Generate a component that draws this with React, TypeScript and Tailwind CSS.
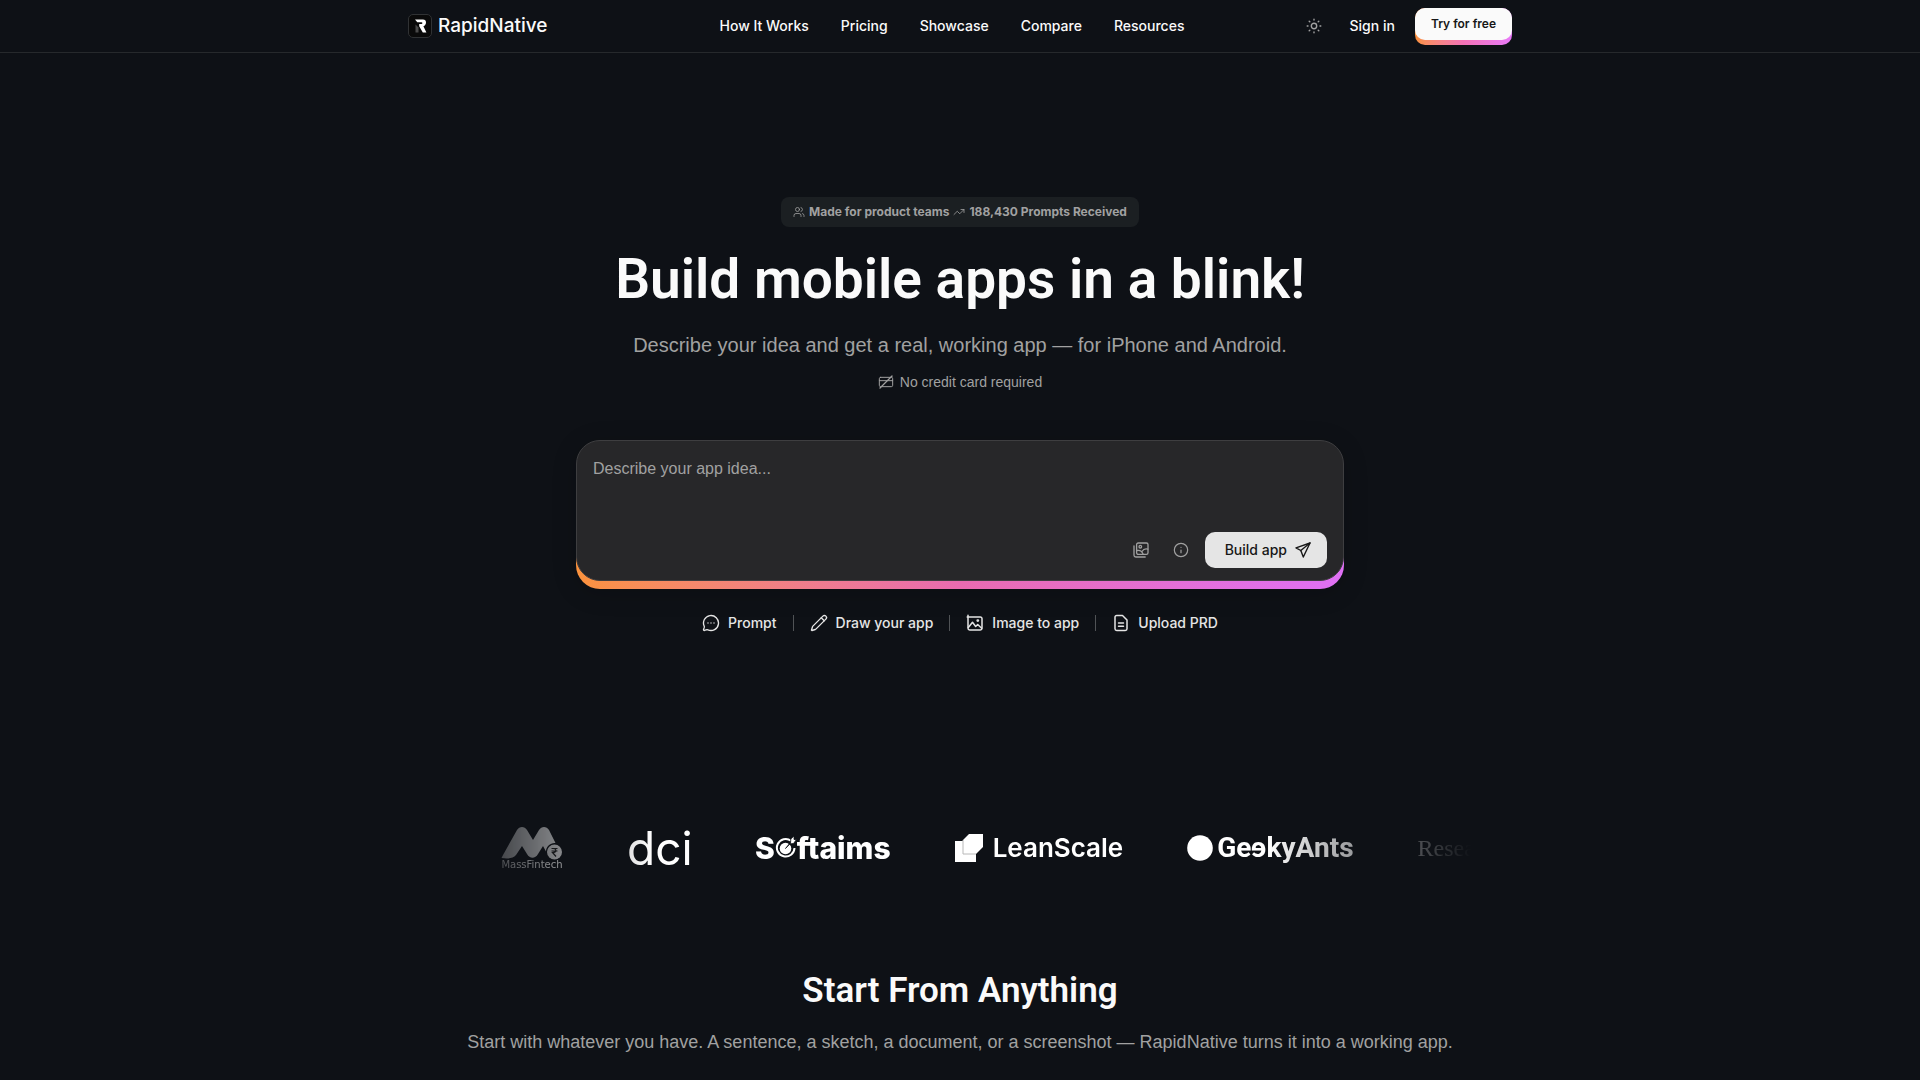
import type { ReactNode } from "react";
import { CreditCard, Info, MessageCircleMore, Pencil, TrendingUp, Users } from "lucide-react";

const NAV_LINKS = ["How It Works", "Pricing", "Showcase", "Compare", "Resources"];

/* ------------------------------------------------------------------ */
/*  Icons                                                              */
/* ------------------------------------------------------------------ */

function SunIcon() {
  return (
    <svg width="16" height="16" viewBox="0 0 16 16" fill="none" stroke="currentColor" strokeWidth="1.4" strokeLinecap="round">
      <circle cx="8" cy="8" r="2.7" />
      <path d="M8 1.2v.8M8 14v.8M1.2 8H2M14 8h.8M3.200 3.200l.6.6M12.200 12.200l.6.6M3.200 12.800l.6-.6M12.200 3.800l.6-.6" />
    </svg>
  );
}

function GalleryIcon() {
  return (
    <svg width="16" height="16" viewBox="0 0 16 16" fill="none" stroke="currentColor" strokeWidth="1.3" strokeLinecap="round" strokeLinejoin="round">
      <rect x="3.6" y="1" width="11.4" height="11.4" rx="1.6" />
      <path d="M1 3.8v9.4c0 1 .8 1.8 1.8 1.8h9.4" />
      <circle cx="7.3" cy="4.7" r="1.3" />
      <path d="M3.800 8.500c3-.6 5.200.8 6.400 3.700M9 9.500c1.200-2 3.300-3 5.800-2.300" />
    </svg>
  );
}

function PlaneIcon() {
  return (
    <svg width="16" height="16" viewBox="0 0 16 16" fill="none" stroke="currentColor" strokeWidth="1.4" strokeLinecap="round" strokeLinejoin="round">
      <path d="M15 1 1 5.800l4.800 2.700L8.300 15 15 1Z" />
      <path d="M15 1 5.800 8.500" />
    </svg>
  );
}

function ImageIcon() {
  return (
    <svg width="18" height="18" viewBox="0 0 18 18" fill="none" stroke="currentColor" strokeWidth="1.5" strokeLinecap="round" strokeLinejoin="round">
      <path d="M2 1.200v13.100c0 1 .8 1.700 1.700 1.700h10.600c1 0 1.700-.7 1.700-1.700V4.700c0-1-.7-1.700-1.700-1.700H1.200" />
      <path d="m2.300 13.500 4.200-5.200 3.200 4.200 2-2 4 3.800" />
      <circle cx="11.800" cy="6.600" r=".7" />
    </svg>
  );
}

function DocIcon() {
  return (
    <svg width="18" height="18" viewBox="0 0 18 18" fill="none" stroke="currentColor" strokeWidth="1.5" strokeLinecap="round" strokeLinejoin="round">
      <path d="M10.500 1.500H4.700C3.700 1.500 3 2.200 3 3.200v11.600c0 1 .7 1.700 1.700 1.700h8.600c1 0 1.700-.7 1.700-1.700V6L10.500 1.500Z" />
      <path d="M6.500 9h5M6.500 12.200h5" />
    </svg>
  );
}

function NoCardIcon() {
  return (
    <span className="relative flex">
      <CreditCard size={16} strokeWidth={1.5} />
      <svg className="absolute inset-0" width="16" height="16" viewBox="0 0 16 16" fill="none" stroke="currentColor" strokeWidth="1.3" strokeLinecap="round">
        <path d="M2 14 14 2" />
      </svg>
    </span>
  );
}

/* ------------------------------------------------------------------ */
/*  Header                                                             */
/* ------------------------------------------------------------------ */

function Header() {
  return (
    <header className="border-b border-[#26292c]">
      <div className="max-w-6xl h-13 mx-auto px-6 grid grid-cols-[1fr_auto_1fr] items-center">
        <a href="#" className="flex items-center gap-[6px]">
          <svg width="24" height="24" viewBox="0 0 24 24">
            <rect x=".5" y=".5" width="23" height="23" rx="4.500" fill="#0a0a0a" stroke="#303234" />
            <path d="M7.500 10.500v8h3v-5Z" fill="#4a4a4a" />
            <path d="M7 5.500h8c2 0 3 1.300 3 3.100 0 1.900-1 3.200-2.600 3.600l3 6.300h-3.600l-3.600-6.200V10h2.300c.6 0 .9-.4.900-.9s-.3-.9-.9-.9H9.300Z" fill="#fff" />
          </svg>
          <span className="text-[19px] font-medium">RapidNative</span>
        </a>

        <nav className="flex gap-8 pr-4 text-sm font-medium">
          {NAV_LINKS.map((link) => (
            <a key={link} href="#">
              {link}
            </a>
          ))}
        </nav>

        <div className="flex items-center justify-end">
          <button aria-label="Toggle theme" className="mr-7 text-[#a1a1a1]">
            <SunIcon />
          </button>
          <a href="#" className="mr-5 text-sm font-medium">
            Sign in
          </a>
          <button className="rounded-[10px] pb-[5px] bg-linear-to-r from-[#fb923c] via-[#f472b6] to-[#e879f9]">
            <span className="flex items-center h-8 px-4 rounded-[10px] bg-[#fafafa] text-xs font-semibold text-[#171717]">
              Try for free
            </span>
          </button>
        </div>
      </div>
    </header>
  );
}

/* ------------------------------------------------------------------ */
/*  Hero                                                               */
/* ------------------------------------------------------------------ */

function PromptBox() {
  return (
    <form className="relative isolate w-full max-w-3xl mt-12 pb-2 rounded-3xl shadow-[0_4px_24px_rgba(0,0,0,0.18)]">
      {/* Gradient lip under the box */}
      <div className="absolute inset-x-0 top-1/2 bottom-0 -z-10 rounded-b-3xl bg-linear-to-r from-[#fb923c] via-[#e96bb0] to-[#e070f5]" />
      <div className="rounded-3xl border border-[#3e3e40] bg-[#272729] px-4 pt-4 pb-3">
        <textarea
          aria-label="App idea"
          placeholder="Describe your app idea..."
          className="block w-full h-[75px] resize-none bg-transparent font-['Liberation_Sans',sans-serif] text-base leading-6 outline-none placeholder:text-[#a1a1a1]"
        />
        <div className="flex items-center justify-end text-[#a1a1a1]">
          <button type="button" aria-label="Add images" className="flex items-center h-9 px-3">
            <GalleryIcon />
          </button>
          <button type="button" aria-label="Info" className="flex items-center h-9 px-3 mr-1">
            <Info size={16} strokeWidth={1.8} />
          </button>
          <button type="submit" className="flex items-center gap-2 h-9 px-5 pr-4 rounded-[10px] bg-[#e5e5e5] text-sm font-medium text-[#171717]">
            Build app
            <PlaneIcon />
          </button>
        </div>
      </div>
    </form>
  );
}

const MODES: { label: string; icon: ReactNode }[] = [
  { label: "Prompt", icon: <MessageCircleMore size={18} strokeWidth={1.8} /> },
  { label: "Draw your app", icon: <Pencil size={18} strokeWidth={1.8} /> },
  { label: "Image to app", icon: <ImageIcon /> },
  { label: "Upload PRD", icon: <DocIcon /> },
];

function Hero() {
  return (
    <section className="flex flex-col items-center px-6 pt-36">
      <div className="flex items-center h-[30px] px-3 rounded-lg bg-[#1b1f22] text-xs font-bold text-[#a1a1a1]">
        <Users size={12} strokeWidth={1.6} />
        <span className="ml-1">Made for product teams</span>
        <TrendingUp size={12} strokeWidth={1.6} className="mx-1" />
        <span>188,430 Prompts Received</span>
      </div>

      <h1 className="mt-5 font-[Roboto,sans-serif] text-[55px] leading-[64px] font-semibold text-[#fafafa]">
        Build mobile apps in a blink!
      </h1>
      <p className="mt-5 font-['Liberation_Sans',sans-serif] text-xl leading-7 text-[#a1a1a1]">
        Describe your idea and get a real, working app — for iPhone and Android.
      </p>
      <p className="flex items-center gap-[6px] mt-[13px] font-['Liberation_Sans',sans-serif] text-sm text-[#a1a1a1]">
        <NoCardIcon />
        No credit card required
      </p>

      <PromptBox />

      <div className="flex items-center mt-[26px] divide-x divide-[#505356] text-sm font-medium text-[#e5e5e5]">
        {MODES.map(({ label, icon }) => (
          <button key={label} className="flex items-center gap-2 h-4 px-4">
            {icon}
            {label}
          </button>
        ))}
      </div>
    </section>
  );
}

/* ------------------------------------------------------------------ */
/*  Customer logos                                                     */
/* ------------------------------------------------------------------ */

function LogoStrip() {
  return (
    <section className="max-w-5xl h-16 mx-auto mt-[185px] overflow-hidden mask-[linear-gradient(to_right,transparent,black_20%,black_80%,transparent)]">
      <div className="flex items-center gap-16 h-full w-max pl-[53px] text-white">
        <div className="w-[62px]">
          <svg width="62" height="34" viewBox="0 0 62 34" fill="#fff" fillOpacity=".9" className="block">
            <path d="M2 29 16 4C18.500 0 23.500 0 26 4l6 10 6-10c2.500-4 7.500-4 10 0l6.500 13c-5-.5-9.500 3.500-9.500 8.500L42 20l-5 8c-2.800 5-8.200 5-11 0l-5-8-6 9c-3 3.500-8 4-14.500 3Z" />
            <circle cx="53.500" cy="26" r="7.500" />
            <path d="M50.500 22.500h6M50.500 25h6M51.500 22.500c4.500 0 4.500 4 0 4l3.500 4" stroke="#222" strokeWidth="1.200" fill="none" />
          </svg>
          <span className="flex justify-center font-['DejaVu_Sans',sans-serif] text-[10px] leading-[10px]">MassFintech</span>
        </div>
        <span className="w-16 text-[46px] leading-none font-normal">dci</span>
        <span className="flex items-center text-[30px] leading-none font-extrabold">
          S
          <svg width="22" height="24" viewBox="0 0 21 24" fill="none">
            <path d="M15.500 4.700A8.800 8.800 0 1 0 19 12" stroke="#fff" strokeWidth="2" />
            <circle cx="10" cy="12.500" r="5.800" fill="#fff" />
            <path d="m10 12.500 5-5 .3-4.500L18.500 0v3.500h2.500l-3 4-4.500.5Z" fill="#fff" stroke="#0e1116" strokeWidth=".8" />
          </svg>
          ftaims
        </span>
        <span className="flex items-center gap-[10px] text-[26px] leading-none font-semibold">
          <svg width="28" height="28" viewBox="0 0 28 28">
            <path d="M0 7h21v21H0Z" fill="#fff" />
            <path d="M14 0h14v13l-7 7H8V6Z" fill="#fff" />
            <path d="M8 6v14h13" fill="none" stroke="#b8b8b8" />
          </svg>
          LeanScale
        </span>
        <span className="flex items-center gap-1 font-[Roboto,sans-serif] text-[28px] leading-none font-bold">
          <svg width="26" height="26" viewBox="0 0 26 26">
            <circle cx="13" cy="13" r="12.800" fill="#fff" />
          </svg>
          <span>
            Ge<span className="inline-block -scale-x-100">e</span>kyAnts
          </span>
        </span>
        <span className="font-['Liberation_Serif',serif] text-2xl">Resea</span>
      </div>
    </section>
  );
}

export default function App() {
  return (
    <div className="min-h-screen overflow-hidden bg-[#0e1116] font-[Inter,sans-serif] text-[#fafafa] antialiased">
      <Header />
      <main>
        <Hero />
        <LogoStrip />
        <section className="flex flex-col items-center px-6 pt-[91px]">
          <h2 className="font-[Roboto,sans-serif] text-[35px] leading-10 font-semibold">Start From Anything</h2>
          <p className="mt-[17px] font-['Liberation_Sans',sans-serif] text-lg text-[#a1a1a1]">
            Start with whatever you have. A sentence, a sketch, a document, or a screenshot — RapidNative turns it into a working app.
          </p>
        </section>
      </main>
    </div>
  );
}
